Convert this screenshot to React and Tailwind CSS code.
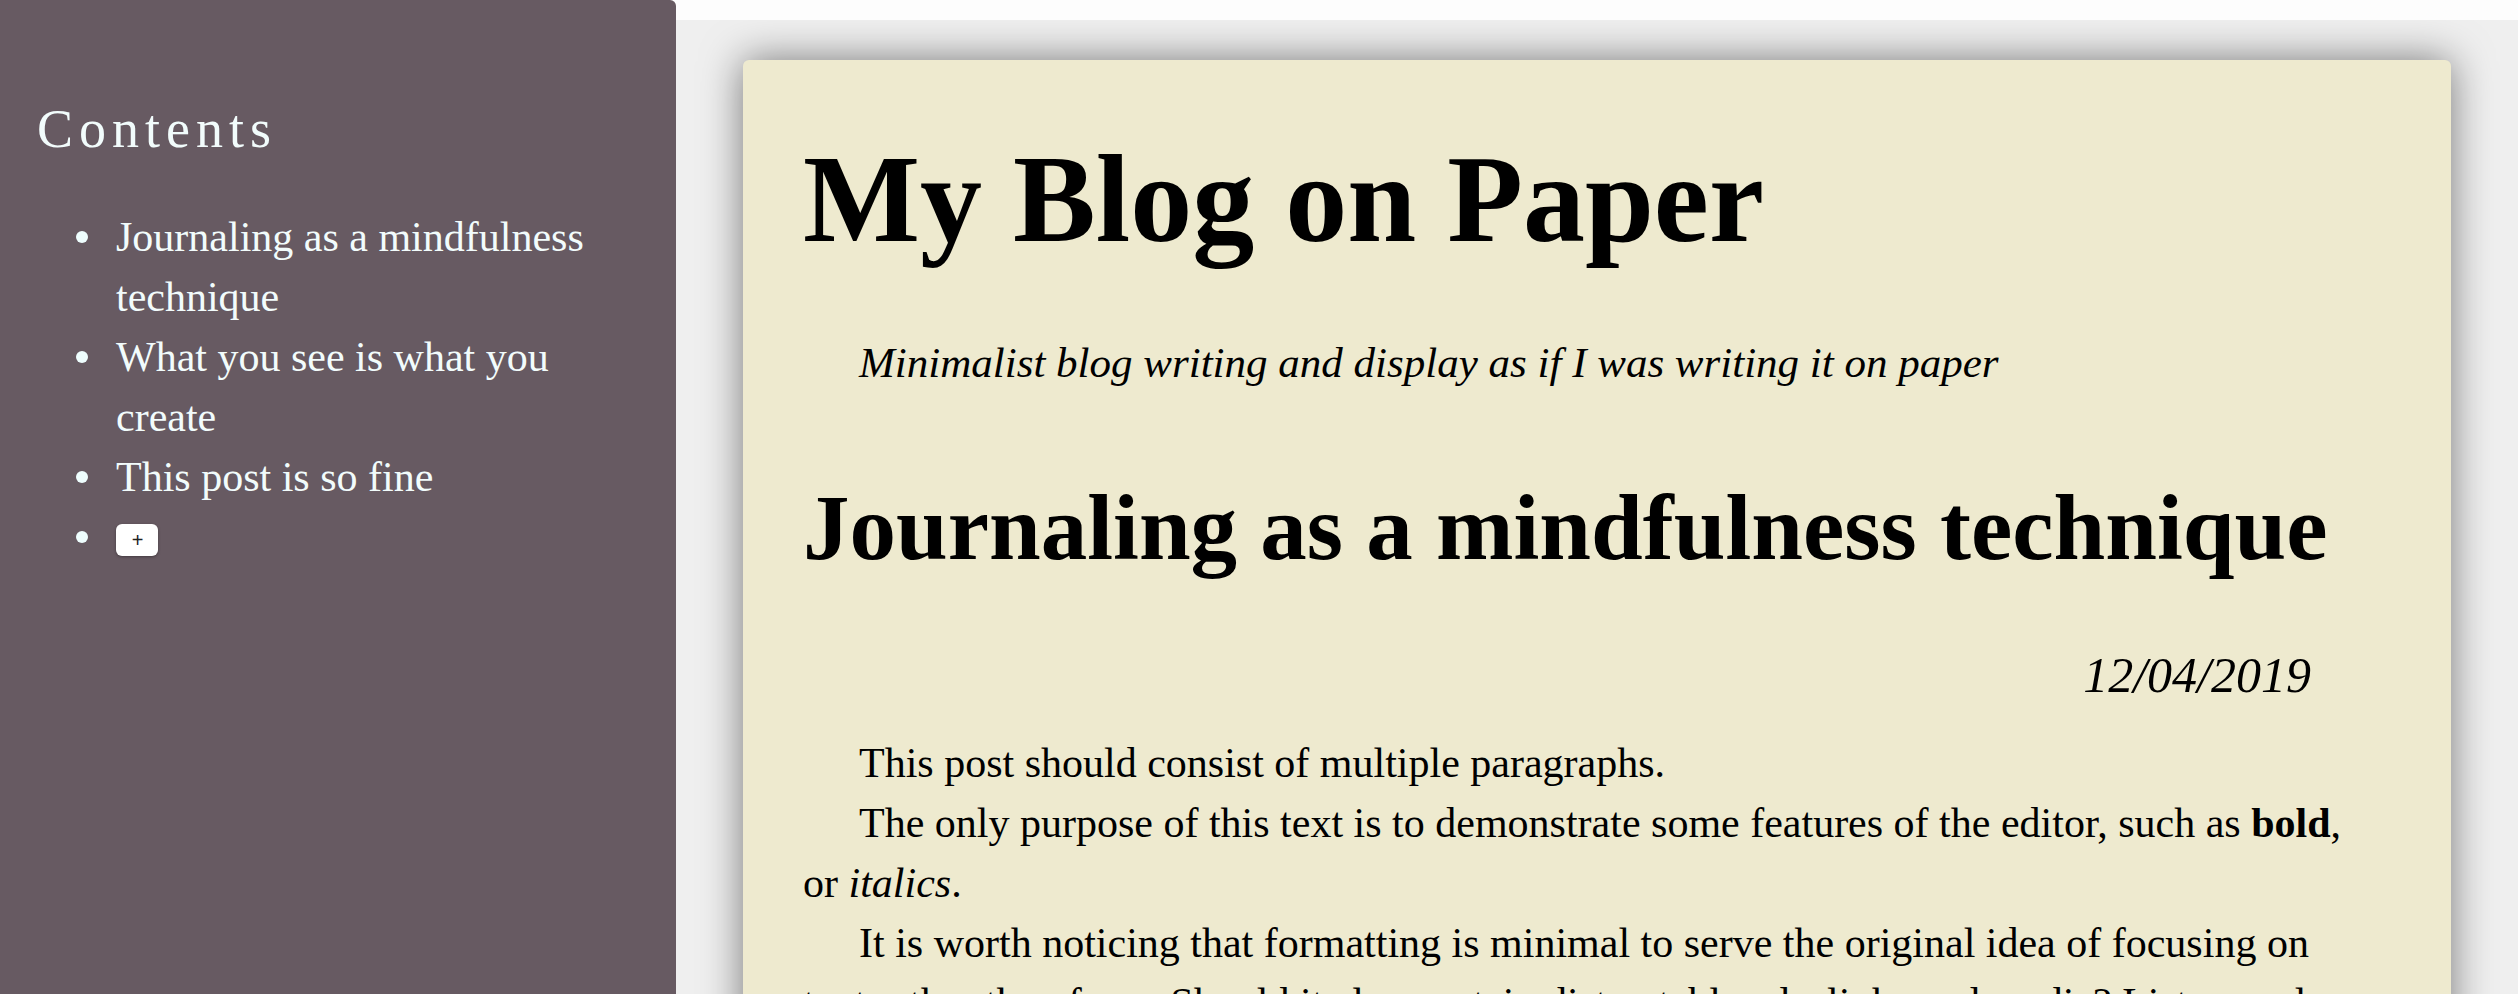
import React from 'react';

const sections = [
    'Journaling as a mindfulness technique',
    'What you see is what you create',
    'This post is so fine',
];

const Bullet = () => (
    <span className="flex h-[60px] w-[38px] shrink-0 items-center">
        <span className="ml-[-2px] h-[12px] w-[12px] rounded-full bg-[#effefe]" />
    </span>
);

const Sidebar = () => (
    <aside className="w-[676px] shrink-0 rounded-tr-[6px] bg-[#675a62] pl-[37px] pr-[37px] pt-[99px] text-[#f2fcfc]">
        <h2 className="text-[54px] leading-[60px] tracking-[6px] font-normal">Contents</h2>
        <ul className="mt-[48px] pl-[41px]">
            {sections.map((title) => (
                <li key={title} className="flex items-start">
                    <Bullet />
                    <span className="text-[42px] leading-[60px]">{title}</span>
                </li>
            ))}
            <li className="flex items-start">
                <Bullet />
                <span className="flex h-[60px] items-center">
                    <button className="mt-[6px] flex h-[32px] w-[42px] items-center justify-center rounded-[6px] bg-white pl-[1px] font-['Liberation_Sans',sans-serif] text-[20px] leading-none text-[#222] shadow-[0_1px_3px_rgba(0,0,0,0.35)]">
                        +
                    </button>
                </span>
            </li>
        </ul>
    </aside>
);

const Post = () => (
    <article className="rounded-[6px] bg-[#eeeacf] px-[60px] pt-[80px] pb-[200px] text-black shadow-[0_0_40px_rgba(0,0,0,0.5)]">
        <h1 className="text-[124px] leading-[120px] font-bold">My Blog on Paper</h1>
        <p className="mt-[73px] indent-[56px] text-[43px] italic leading-[60px]">
            Minimalist blog writing and display as if I was writing it on paper
        </p>
        <h2 className="mt-[87px] text-[93px] leading-[96px] font-bold">Journaling as a mindfulness technique</h2>
        <p className="mt-[69px] pr-[80px] text-right text-[50px] italic leading-[60px]">12/04/2019</p>
        <div className="mt-[28px] pr-[16px] text-[42px] leading-[60px]">
            <p className="indent-[56px]">This post should consist of multiple paragraphs.</p>
            <p className="indent-[56px]">
                The only purpose of this text is to demonstrate some features of the editor, such as <b>bold</b>, or <i>italics</i>.
            </p>
            <p className="indent-[56px]">
                It is worth noticing that formatting is minimal to serve the original idea of focusing on text rather than form. Should it also contain distractable ads, links and media? Lists are also supported.
            </p>
        </div>
    </article>
);

export default function App() {
    return (
        <div className="flex h-[994px] w-full overflow-hidden bg-white font-['Liberation_Serif',serif]">
            <Sidebar />
            <main className="flex min-w-0 flex-1 flex-col">
                <div className="h-[20px] shrink-0 bg-[#fdfdfd]" />
                <div className="flex-1 overflow-hidden bg-[#efefef] px-[67px] pt-[40px]">
                    <Post />
                </div>
            </main>
        </div>
    );
}
